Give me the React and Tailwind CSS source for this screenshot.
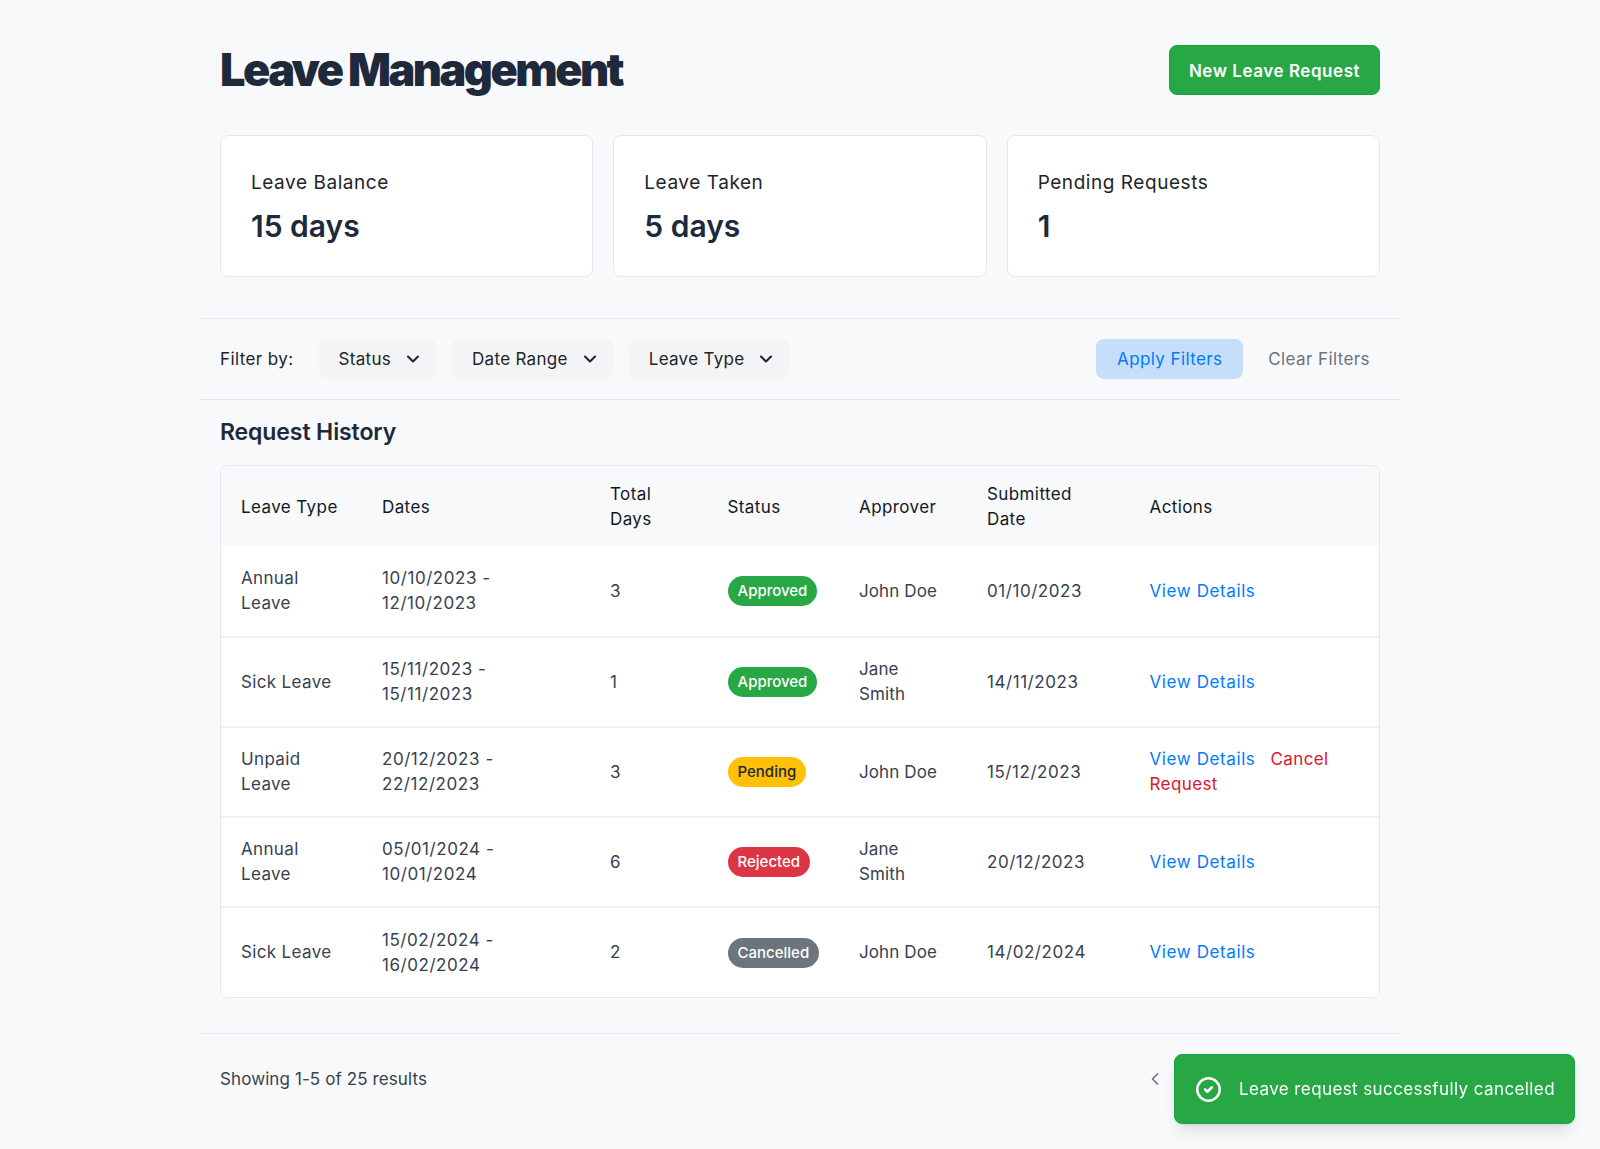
import { ChevronDown, ChevronLeft, CircleCheck } from 'lucide-react';

const stats = [
  { label: 'Leave Balance', value: '15 days' },
  { label: 'Leave Taken', value: '5 days' },
  { label: 'Pending Requests', value: '1' },
];

const filters = ['Status', 'Date Range', 'Leave Type'];

const badgeStyles = {
  Approved: 'bg-[#28a745] text-white',
  Pending: 'bg-[#ffc107] text-[#1f2937]',
  Rejected: 'bg-[#dc3545] text-white',
  Cancelled: 'bg-[#6c757d] text-white',
};

const rows = [
  { type: 'Annual Leave', dates: '10/10/2023 - 12/10/2023', days: 3, status: 'Approved', approver: 'John Doe', submitted: '01/10/2023' },
  { type: 'Sick Leave', dates: '15/11/2023 - 15/11/2023', days: 1, status: 'Approved', approver: 'Jane Smith', submitted: '14/11/2023' },
  { type: 'Unpaid Leave', dates: '20/12/2023 - 22/12/2023', days: 3, status: 'Pending', approver: 'John Doe', submitted: '15/12/2023', cancel: true },
  { type: 'Annual Leave', dates: '05/01/2024 - 10/01/2024', days: 6, status: 'Rejected', approver: 'Jane Smith', submitted: '20/12/2023' },
  { type: 'Sick Leave', dates: '15/02/2024 - 16/02/2024', days: 2, status: 'Cancelled', approver: 'John Doe', submitted: '14/02/2024' },
];

const App = () => {
  return (
    <div className="min-h-screen bg-[#f8f9fa] font-['Inter',sans-serif] text-[17px] leading-[25px] tracking-[0.4px] text-[#1e293b]">
      <div className="mx-auto w-[1200px] pt-[20px]">
        {/* Header */}
        <div className="flex items-center justify-between px-5 pt-[25px]">
          <h1 className="text-[45px] leading-[50px] font-black tracking-[-0.056em] text-[#1e293b]">Leave Management</h1>
          <button className="h-[50px] w-[211px] rounded-lg border border-[#16a34a] bg-[#28a745] pt-[2px] font-semibold tracking-[0.55px] text-white">
            New Leave Request
          </button>
        </div>

        {/* Stats */}
        <div className="mt-10 grid grid-cols-3 gap-5 px-5">
          {stats.map((stat) => (
            <div key={stat.label} className="h-[142px] rounded-lg border border-[#e5e7eb] bg-white px-[30px] pt-[34px]">
              <p className="text-[19px] tracking-[0.55px] text-[#212529]">{stat.label}</p>
              <p className="mt-[11px] text-[30px] leading-[40px] font-semibold tracking-normal text-[#1e293b]">{stat.value}</p>
            </div>
          ))}
        </div>

        {/* Filters */}
        <div className="mt-[41px] flex h-[82px] items-center border-y border-[#e5e7eb] px-5">
          <span className="mr-[25px] text-[#212529]">Filter by:</span>
          <div className="flex gap-4">
            {filters.map((filter) => (
              <button key={filter} className="flex h-10 items-center gap-3 rounded-lg bg-[#f3f4f6] pr-[13px] pl-5 tracking-[0.3px] text-[#212529]">
                {filter}
                <ChevronDown size={20} strokeWidth={2.5} />
              </button>
            ))}
          </div>
          <button className="ml-auto h-10 w-[147px] rounded-lg bg-[#c5dffa] text-[#007bff]">Apply Filters</button>
          <button className="mr-[10px] ml-[25px] text-[#6b7280]">Clear Filters</button>
        </div>

        {/* Table */}
        <div className="px-5">
          <h2 className="mt-[17px] text-[23px] leading-[30px] font-semibold tracking-[-0.1px] text-[#1e293b]">Request History</h2>
          <div className="mt-[18px] overflow-hidden rounded-lg border border-[#e5e7eb] bg-white">
            <table className="w-full table-fixed text-left">
              <colgroup>
                <col className="w-[141px]" />
                <col className="w-[228px]" />
                <col className="w-[117.5px]" />
                <col className="w-[131.5px]" />
                <col className="w-[128px]" />
                <col className="w-[162.5px]" />
                <col />
              </colgroup>
              <thead className="bg-[#f8f9fa]">
                <tr className="h-[80px]">
                  <th className="px-5 pt-[2px] font-normal text-[#111827]">Leave Type</th>
                  <th className="px-5 pt-[2px] font-normal text-[#111827]">Dates</th>
                  <th className="px-5 pt-[2px] font-normal text-[#111827]">Total Days</th>
                  <th className="px-5 pt-[2px] font-normal text-[#111827]">Status</th>
                  <th className="px-5 pt-[2px] font-normal text-[#111827]">Approver</th>
                  <th className="px-5 pt-[2px] font-normal text-[#111827]">Submitted Date</th>
                  <th className="px-5 pt-[2px] font-normal text-[#111827]">Actions</th>
                </tr>
              </thead>
              <tbody className="text-[#374151]">
                {rows.map((row, i) => (
                  <tr key={i} className={i > 0 ? 'h-[90px] border-t-2 border-[#f0f1f4]' : 'h-[91px]'}>
                    <td className="px-5 tracking-[0.35px]">{row.type}</td>
                    <td className="px-5 tracking-[0.55px]">{row.dates}</td>
                    <td className="px-5">{row.days}</td>
                    <td className="px-5">
                      <span className={`inline-block rounded-full px-[10px] py-[2px] align-middle text-[15px] leading-[26px] font-medium tracking-normal ${badgeStyles[row.status]}`}>
                        {row.status}
                      </span>
                    </td>
                    <td className="px-5 tracking-[0.1px]">{row.approver}</td>
                    <td className="px-5 tracking-[0.55px]">{row.submitted}</td>
                    <td className="px-5 tracking-[0.6px]">
                      <a className="mr-[15px] text-[#007bff]">View Details</a>
                      {row.cancel && <a className="tracking-[0.4px] text-[#dc1433]">Cancel Request</a>}
                    </td>
                  </tr>
                ))}
              </tbody>
            </table>
          </div>
        </div>

        {/* Pagination */}
        <div className="mt-[35px] flex items-center justify-between border-t border-[#e5e7eb] px-5 pt-[33px] pb-[32px]">
          <span className="tracking-[0.1px] text-[#374151]">Showing 1-5 of 25 results</span>
          <div className="flex w-[235px] items-center pb-[2px]">
            <ChevronLeft size={20} strokeWidth={2} className="text-[#6b7280]" />
          </div>
        </div>
      </div>

      {/* Toast */}
      <div className="fixed right-[25px] bottom-[25px] flex h-[70px] w-[401px] items-center gap-[17px] rounded-lg border border-[#16a34a] bg-[#28a745] pl-5 text-white shadow-lg">
        <CircleCheck size={27} strokeWidth={2.2} />
        <span>Leave request successfully cancelled</span>
      </div>
    </div>
  );
};

export default App;
